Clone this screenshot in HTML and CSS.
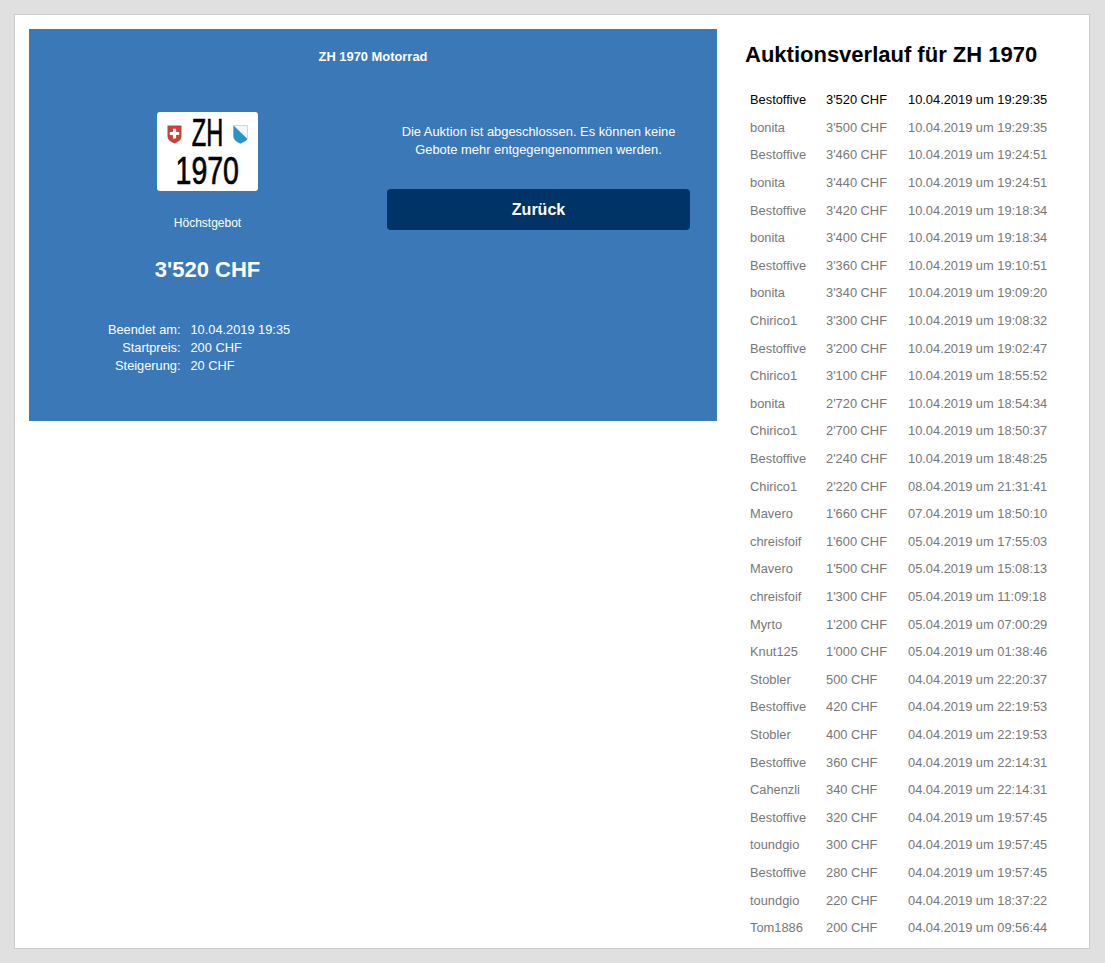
FILE: index.html
```html
<!DOCTYPE html>
<html lang="de">
<head>
<meta charset="utf-8">
<title>ZH 1970 Motorrad</title>
<link rel="stylesheet" href="styles.css">
</head>
<body>
<main class="card">
  <section class="panel">
    <h2 class="panel-title">ZH 1970 Motorrad</h2>
    <div class="panel-cols">
      <div class="col-left">
        <div class="plate">
          <div class="plate-top">
            <svg class="shield" viewBox="0 0 15 19"><path d="M0.5 0.5H14.5V11C14.5 15 11 17 7.5 18.5C4 17 0.5 15 0.5 11Z" fill="#c8423c"/><path d="M5.9 3.8H9.1V7.1H12.2V10.1H9.1V13.4H5.9V10.1H2.8V7.1H5.9Z" fill="#fff"/></svg>
            <span class="plate-zh">ZH</span>
            <svg class="shield" viewBox="0 0 15 19"><path d="M0.5 0.5H14.5V11C14.5 15 11 17 7.5 18.5C4 17 0.5 15 0.5 11Z" fill="#f4f8fa" stroke="#a9c1cf" stroke-width=".6"/><path d="M0.5 0.5L14.5 14C13.5 16 10 17.4 7.5 18.5C4 17 0.5 15 0.5 11Z" fill="#2a93c6"/></svg>
          </div>
          <div class="plate-num"><span class="plate-num-text">1970</span></div>
        </div>
        <p class="label">Höchstgebot</p>
        <p class="price">3'520 CHF</p>
        <dl class="facts">
          <div class="fact"><dt>Beendet am:</dt><dd>10.04.2019 19:35</dd></div>
          <div class="fact"><dt>Startpreis:</dt><dd>200 CHF</dd></div>
          <div class="fact"><dt>Steigerung:</dt><dd>20 CHF</dd></div>
        </dl>
      </div>
      <div class="col-right">
        <p class="notice">Die Auktion ist abgeschlossen. Es können keine Gebote mehr entgegengenommen werden.</p>
        <a class="back" href="#">Zurück</a>
      </div>
    </div>
  </section>
  <aside class="history">
    <h1 class="history-title">Auktionsverlauf für ZH 1970</h1>
    <table class="bids">
      <tbody>
        <tr class="top"><td>Bestoffive</td><td>3'520 CHF</td><td>10.04.2019 um 19:29:35</td></tr>
        <tr><td>bonita</td><td>3'500 CHF</td><td>10.04.2019 um 19:29:35</td></tr>
        <tr><td>Bestoffive</td><td>3'460 CHF</td><td>10.04.2019 um 19:24:51</td></tr>
        <tr><td>bonita</td><td>3'440 CHF</td><td>10.04.2019 um 19:24:51</td></tr>
        <tr><td>Bestoffive</td><td>3'420 CHF</td><td>10.04.2019 um 19:18:34</td></tr>
        <tr><td>bonita</td><td>3'400 CHF</td><td>10.04.2019 um 19:18:34</td></tr>
        <tr><td>Bestoffive</td><td>3'360 CHF</td><td>10.04.2019 um 19:10:51</td></tr>
        <tr><td>bonita</td><td>3'340 CHF</td><td>10.04.2019 um 19:09:20</td></tr>
        <tr><td>Chirico1</td><td>3'300 CHF</td><td>10.04.2019 um 19:08:32</td></tr>
        <tr><td>Bestoffive</td><td>3'200 CHF</td><td>10.04.2019 um 19:02:47</td></tr>
        <tr><td>Chirico1</td><td>3'100 CHF</td><td>10.04.2019 um 18:55:52</td></tr>
        <tr><td>bonita</td><td>2'720 CHF</td><td>10.04.2019 um 18:54:34</td></tr>
        <tr><td>Chirico1</td><td>2'700 CHF</td><td>10.04.2019 um 18:50:37</td></tr>
        <tr><td>Bestoffive</td><td>2'240 CHF</td><td>10.04.2019 um 18:48:25</td></tr>
        <tr><td>Chirico1</td><td>2'220 CHF</td><td>08.04.2019 um 21:31:41</td></tr>
        <tr><td>Mavero</td><td>1'660 CHF</td><td>07.04.2019 um 18:50:10</td></tr>
        <tr><td>chreisfoif</td><td>1'600 CHF</td><td>05.04.2019 um 17:55:03</td></tr>
        <tr><td>Mavero</td><td>1'500 CHF</td><td>05.04.2019 um 15:08:13</td></tr>
        <tr><td>chreisfoif</td><td>1'300 CHF</td><td>05.04.2019 um 11:09:18</td></tr>
        <tr><td>Myrto</td><td>1'200 CHF</td><td>05.04.2019 um 07:00:29</td></tr>
        <tr><td>Knut125</td><td>1'000 CHF</td><td>05.04.2019 um 01:38:46</td></tr>
        <tr><td>Stobler</td><td>500 CHF</td><td>04.04.2019 um 22:20:37</td></tr>
        <tr><td>Bestoffive</td><td>420 CHF</td><td>04.04.2019 um 22:19:53</td></tr>
        <tr><td>Stobler</td><td>400 CHF</td><td>04.04.2019 um 22:19:53</td></tr>
        <tr><td>Bestoffive</td><td>360 CHF</td><td>04.04.2019 um 22:14:31</td></tr>
        <tr><td>Cahenzli</td><td>340 CHF</td><td>04.04.2019 um 22:14:31</td></tr>
        <tr><td>Bestoffive</td><td>320 CHF</td><td>04.04.2019 um 19:57:45</td></tr>
        <tr><td>toundgio</td><td>300 CHF</td><td>04.04.2019 um 19:57:45</td></tr>
        <tr><td>Bestoffive</td><td>280 CHF</td><td>04.04.2019 um 19:57:45</td></tr>
        <tr><td>toundgio</td><td>220 CHF</td><td>04.04.2019 um 18:37:22</td></tr>
        <tr><td>Tom1886</td><td>200 CHF</td><td>04.04.2019 um 09:56:44</td></tr>
      </tbody>
    </table>
  </aside>
</main>
</body>
</html>
```
FILE: styles.css
```css
* { box-sizing: border-box; }
html, body { margin: 0; height: 100%; }
body {
  background: #e0e0e0;
  font-family: "Liberation Sans", Arial, sans-serif;
  padding: 14px 15px 14px 14px;
  overflow: hidden;
}
.card {
  width: 1076px;
  height: 935px;
  background: #fff;
  border: 1px solid #ccc;
  padding: 14px 14px 0;
  display: flex;
  align-items: flex-start;
}
.panel {
  width: 688px;
  height: 392px;
  background: #3a78b8;
  color: #fff;
  flex: none;
}
.panel-title {
  margin: 0;
  padding-top: 20px;
  height: 55px;
  font-size: 12.9px;
  line-height: 15px;
  font-weight: bold;
  text-align: center;
}
.panel-cols { display: flex; }
.col-left {
  width: 357px;
  padding-top: 28px;
  display: flex;
  flex-direction: column;
  align-items: center;
}
.plate {
  width: 101px;
  height: 79px;
  background: #fff;
  border-radius: 3px;
  color: #000;
  text-align: center;
  padding-top: 5px;
  -webkit-text-stroke: .7px #000;
}
.plate-top {
  display: flex;
  justify-content: center;
  align-items: center;
  gap: 9px;
  height: 33px;
  padding-right: 1px;
}
.shield { width: 15px; height: 19px; flex: none; margin-top: 2px; }
.plate-zh {
  display: block;
  font-size: 38px;
  line-height: 33px;
  width: 51px;
  margin: 0 -9px;
  transform: scaleX(.62);
}
.plate-num { font-size: 38px; line-height: 38px; margin-top: 2px; padding-right: 1px; }
.plate-num-text { display: inline-block; transform: scaleX(.75); }
.label { margin: 25px 0 0; font-size: 12px; line-height: 14px; }
.price { margin: 27px 0 0; font-size: 22px; line-height: 26px; font-weight: bold; }
.facts { margin: 38px 0 0; font-size: 12.8px; line-height: 18px; }
.fact { display: flex; gap: 10px; }
.fact dt { width: 110px; text-align: right; margin-left: -44px; }
.fact dd { margin: 0; width: 110px; }
.col-right {
  width: 303px;
  margin-left: 1px;
  padding-top: 39px;
}
.notice {
  margin: 0;
  font-size: 12.9px;
  line-height: 18px;
  text-align: center;
  padding: 0 8px;
}
.back {
  display: block;
  margin-top: 30px;
  height: 41px;
  line-height: 41px;
  background: #003366;
  border-radius: 4px;
  color: #fff;
  font-size: 16px;
  font-weight: bold;
  text-align: center;
  text-decoration: none;
}
.history { margin-left: 28px; flex: 1; }
.history-title {
  margin: 0;
  padding-top: 13px;
  font-size: 22px;
  line-height: 26px;
  font-weight: bold;
  color: #000;
}
.bids {
  margin: 18px 0 0 5px;
  border-collapse: collapse;
  font-size: 12.85px;
  color: #777;
}
.bids td { padding: 0; height: 27.6px; white-space: nowrap; }
.bids td:nth-child(1) { width: 76px; }
.bids td:nth-child(2) { width: 82px; }
.bids .top { color: #000; }
```
